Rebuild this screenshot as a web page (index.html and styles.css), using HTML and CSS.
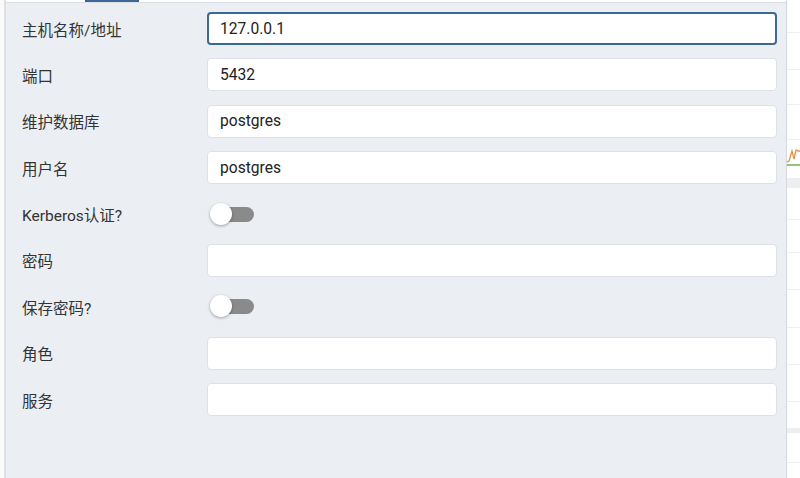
FILE: index.html
```html
<!DOCTYPE html>
<html lang="zh-CN">
<head>
  <meta charset="UTF-8">
  <meta name="viewport" content="width=device-width, initial-scale=1.0">
  <link rel="stylesheet" href="styles.css">
</head>
<body>
  <div class="page">
    <div class="gutter"></div>

    <div class="dialog">
      <div class="tabbar"><span class="tab-active"></span></div>
      <form class="form">
        <label class="label">主机名称/地址</label>
        <input class="field focused" type="text" value="127.0.0.1">

        <label class="label">端口</label>
        <input class="field" type="text" value="5432">

        <label class="label">维护数据库</label>
        <input class="field" type="text" value="postgres">

        <label class="label">用户名</label>
        <input class="field" type="text" value="postgres">

        <label class="label">Kerberos认证?</label>
        <div class="switch-cell"><span class="switch"><span class="knob"></span></span></div>

        <label class="label">密码</label>
        <input class="field" type="password" value="">

        <label class="label">保存密码?</label>
        <div class="switch-cell"><span class="switch"><span class="knob"></span></span></div>

        <label class="label">角色</label>
        <input class="field" type="text" value="">

        <label class="label">服务</label>
        <input class="field" type="text" value="">
      </form>
    </div>

    <div class="backdrop">
      <div class="bg-row h33"></div>
      <div class="bg-row h37"></div>
      <div class="bg-row h35"></div>
      <div class="bg-row h35"></div>
      <div class="bg-row chart">
        <svg width="14" height="26" viewBox="0 0 14 26">
          <polyline points="0,24 2,23 5,13 7,21 9,12 11,13 14,13" fill="none" stroke="#e8904a" stroke-width="1.3"/>
        </svg>
      </div>
      <div class="bg-row h12 plain"></div>
      <div class="bg-row band h10"></div>
      <div class="bg-row h32"></div>
      <div class="bg-row h33"></div>
      <div class="bg-row h37"></div>
      <div class="bg-row h38"></div>
      <div class="bg-row h37"></div>
      <div class="bg-row h37"></div>
      <div class="bg-row h26 plain"></div>
      <div class="bg-row band h5"></div>
      <div class="bg-row h30"></div>
    </div>
  </div>
</body>
</html>
```

FILE: styles.css
```css
body {
  margin: 0;
  padding: 0;
  background: #fff;
  color: #333;
  font-family: Roboto, 'Noto Sans CJK SC', sans-serif;
  font-size: 15.5px;
}

.page {
  display: flex;
  height: 478px;
  overflow: hidden;
}

.gutter {
  width: 4px;
  flex: none;
  background: #fafafa;
}

.dialog {
  width: 780px;
  flex: none;
  display: flex;
  flex-direction: column;
  background: #ebeef3;
  border-left: 2px solid #dfe0e3;
  border-right: 1px solid #d5d8dd;
}

.tabbar {
  height: 2px;
  background: #fff;
  border-bottom: 1px solid #dcdfe4;
}

.tab-active {
  display: block;
  margin-left: 79px;
  width: 54px;
  height: 2px;
  background: #3b6894;
}

.form {
  display: grid;
  grid-template-columns: 185px 1fr;
  grid-auto-rows: 33px;
  row-gap: 13.4px;
  align-items: center;
  padding: 9px 9px 0 16px;
}

.label {
  color: #333;
  font-size: 15.5px;
}

.field {
  box-sizing: border-box;
  height: 33px;
  width: 100%;
  margin: 0;
  padding: 0 12px;
  border: 1px solid #dde0e6;
  border-radius: 4px;
  background: #fff;
  color: #222;
  font-family: Roboto, 'Noto Sans CJK SC', sans-serif;
  font-size: 15.6px;
  outline: none;
}

.field.focused {
  border: 2px solid #3b6894;
  padding-left: 11px;
}

.switch-cell {
  display: flex;
  align-items: center;
  height: 33px;
}

.switch {
  position: relative;
  display: block;
  width: 41px;
  height: 15px;
  margin-left: 6px;
  border-radius: 8px;
  background: #8a8a8a;
}

.knob {
  position: absolute;
  left: -3px;
  top: -4px;
  width: 22px;
  height: 22px;
  border-radius: 50%;
  background: #fff;
  box-shadow: 0 1px 3px rgba(0, 0, 0, .35);
}

.backdrop {
  flex: 1;
  display: flex;
  flex-direction: column;
  background: #fff;
}

.bg-row {
  flex: none;
  box-sizing: border-box;
  border-bottom: 1px solid #eeeff1;
}

.bg-row.plain {
  border-bottom: none;
}

.bg-row.band {
  background: #eceef2;
  border-bottom: none;
}

.bg-row.chart {
  height: 26px;
  border-bottom: 2px solid #8fc77a;
  display: flex;
  align-items: flex-end;
}

.bg-row.chart svg {
  display: block;
}

.h5 { height: 5px; }
.h10 { height: 10px; }
.h12 { height: 12px; }
.h26 { height: 26px; }
.h30 { height: 30px; }
.h32 { height: 32px; }
.h33 { height: 33px; }
.h35 { height: 35px; }
.h37 { height: 37px; }
.h38 { height: 38px; }
```
